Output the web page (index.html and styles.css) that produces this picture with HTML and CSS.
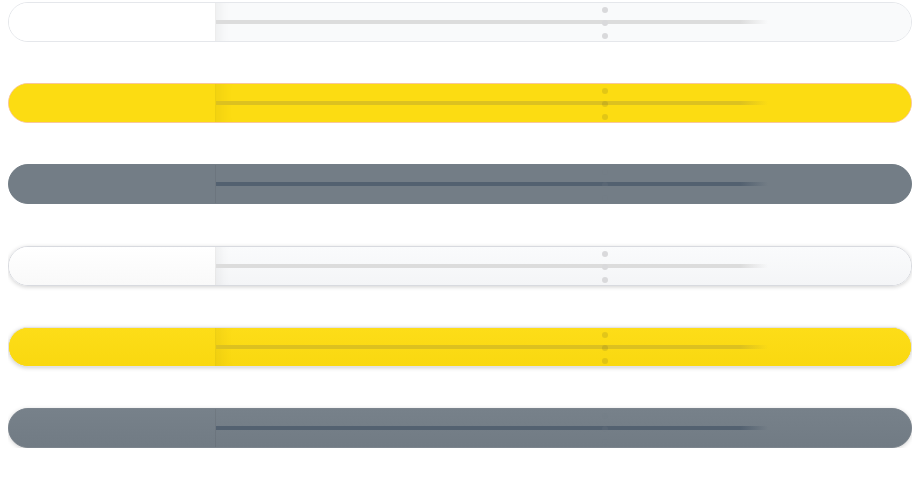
FILE: index.html
```html
<!DOCTYPE html>
<html>
<head>
<meta charset="utf-8">
<link rel="stylesheet" href="styles.css">
</head>
<body>
<div class="stack">
  <div class="bar bar-light">
    <div class="pane-left"></div>
    <div class="pane-right"><div class="track"></div><div class="handle"><span></span><span></span><span></span></div></div>
  </div>
  <div class="bar bar-yellow">
    <div class="pane-left"></div>
    <div class="pane-right"><div class="track"></div><div class="handle"><span></span><span></span><span></span></div></div>
  </div>
  <div class="bar bar-gray">
    <div class="pane-left"></div>
    <div class="pane-right"><div class="track"></div><div class="handle"><span></span><span></span><span></span></div></div>
  </div>
  <div class="bar bar-light raised group-start">
    <div class="pane-left"></div>
    <div class="pane-right"><div class="track"></div><div class="handle"><span></span><span></span><span></span></div></div>
  </div>
  <div class="bar bar-yellow raised">
    <div class="pane-left"></div>
    <div class="pane-right"><div class="track"></div><div class="handle"><span></span><span></span><span></span></div></div>
  </div>
  <div class="bar bar-gray raised">
    <div class="pane-left"></div>
    <div class="pane-right"><div class="track"></div><div class="handle"><span></span><span></span><span></span></div></div>
  </div>
</div>
</body>
</html>
```
FILE: styles.css
```css
html, body { background: #fff; }
body { margin: 2px 8px 0 8px; font-family: "Liberation Sans", Arial, sans-serif; }
.stack { display: flex; flex-direction: column; gap: 41px; }
.group-start { margin-top: 1px; }
.bar {
  height: 38px;
  border: 1px solid #e5e7eb;
  border-radius: 20px;
  display: flex;
  overflow: hidden;
}
.pane-left {
  width: 206px;
  border-right: 1px solid rgba(0,0,0,0.07);
}
.pane-right {
  flex: 1;
  position: relative;
  display: flex;
  align-items: center;
  box-shadow: inset 14px 0 12px -10px rgba(0,0,0,0.05);
}
.track {
  width: 552px;
  height: 4px;
}
.handle {
  position: absolute;
  left: 386px;
  top: 4px;
  display: flex;
  flex-direction: column;
  gap: 7px;
}
.handle span { display: block; width: 6px; height: 6px; border-radius: 50%; }

/* light */
.bar-light .pane-left { background: #fff; }
.bar-light .pane-right { background: #f9fafb; }
.bar-light .track { background: linear-gradient(to right, #dcdcdc 0, #dcdcdc 95%, rgba(220,220,220,0) 100%); }
.bar-light .handle span { background: #d9d9db; }

/* yellow */
.bar-yellow { border-color: #f9c79a; background: #fcdc12; }
.bar-yellow .pane-left { background: #fcdc12; border-right-color: rgba(0,0,0,0.06); }
.bar-yellow .pane-right { background: #fcdc12; box-shadow: inset 16px 0 12px -10px rgba(120,90,0,0.08); }
.bar-yellow .track { background: linear-gradient(to right, #dcc120 0, #dcc120 95%, rgba(220,193,32,0) 100%); }
.bar-yellow .handle span { background: rgba(110,100,40,0.18); }

/* gray */
.bar-gray { border-color: #747e87; background: #737d86; }
.bar-gray .pane-left { background: #737d86; border-right-color: rgba(0,0,0,0.06); }
.bar-gray .pane-right { background: #737d86; box-shadow: none; }
.bar-gray .track { background: linear-gradient(to right, #536170 0, #536170 95%, rgba(83,97,112,0) 100%); }
.bar-gray .handle span { background: rgba(115,125,134,0.2); }

/* raised variants */
.raised { box-shadow: 0 1px 4px rgba(0,0,0,0.18); }
.bar-light.raised { border-color: #d8dadf; }
.bar-light.raised .pane-left { background: linear-gradient(#ffffff, #f9f9f9); }
.bar-light.raised .pane-right { background: linear-gradient(#fafbfc, #f4f5f7); }
.bar-yellow.raised { border-color: #e3e2e6; }
.bar-yellow.raised .pane-left,
.bar-yellow.raised .pane-right { background: linear-gradient(#fddd18, #f9d810); }
.bar-yellow.raised .pane-right { box-shadow: inset 16px 0 12px -10px rgba(120,90,0,0.08); }
.bar-gray.raised { border-color: #7b848d; }
.bar-gray.raised .pane-left,
.bar-gray.raised .pane-right { background: linear-gradient(#77818a, #717b84); }
```
